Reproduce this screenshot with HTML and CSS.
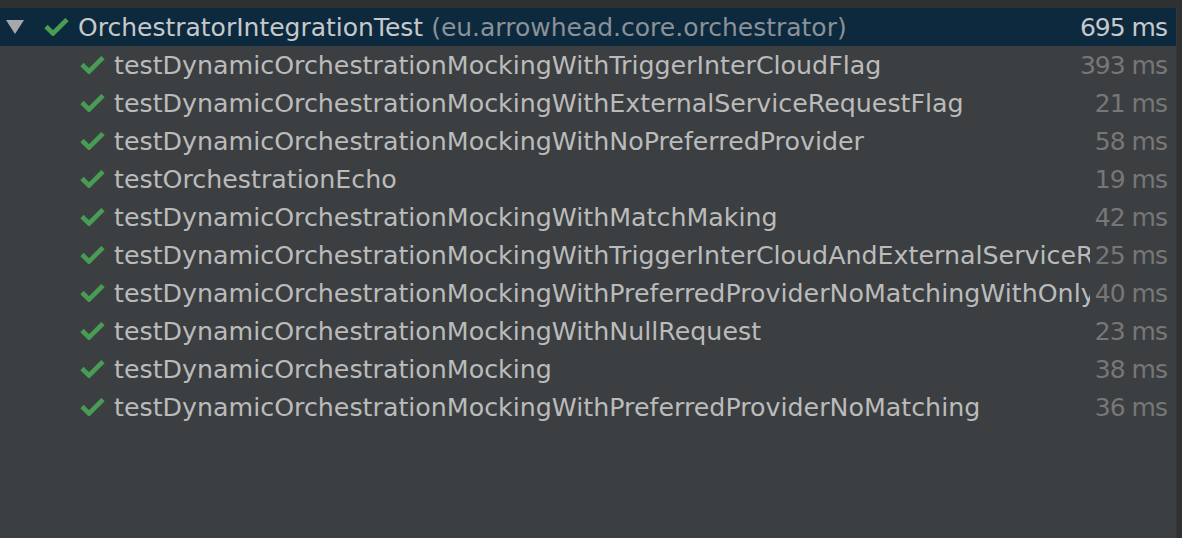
FILE: index.html
```html
<!DOCTYPE html>
<html>
<head>
<meta charset="utf-8">
<link rel="stylesheet" href="styles.css">
</head>
<body>
<div class="panel">
  <div class="topbar"></div>
  <div class="body">
    <div class="tree">
      <div class="row root">
        <span class="arrow"></span>
        <svg class="check" viewBox="0 0 25 18"><polyline points="2,8.5 9,15.5 23,1.5"/></svg>
        <span class="name">OrchestratorIntegrationTest <span class="pkg">(eu.arrowhead.core.orchestrator)</span></span>
        <span class="time">695 ms</span>
      </div>
      <div class="row child">
        <svg class="check" viewBox="0 0 25 18"><polyline points="2,8.5 9,15.5 23,1.5"/></svg>
        <span class="name">testDynamicOrchestrationMockingWithTriggerInterCloudFlag</span>
        <span class="time">393 ms</span>
      </div>
      <div class="row child">
        <svg class="check" viewBox="0 0 25 18"><polyline points="2,8.5 9,15.5 23,1.5"/></svg>
        <span class="name">testDynamicOrchestrationMockingWithExternalServiceRequestFlag</span>
        <span class="time">21 ms</span>
      </div>
      <div class="row child">
        <svg class="check" viewBox="0 0 25 18"><polyline points="2,8.5 9,15.5 23,1.5"/></svg>
        <span class="name">testDynamicOrchestrationMockingWithNoPreferredProvider</span>
        <span class="time">58 ms</span>
      </div>
      <div class="row child">
        <svg class="check" viewBox="0 0 25 18"><polyline points="2,8.5 9,15.5 23,1.5"/></svg>
        <span class="name">testOrchestrationEcho</span>
        <span class="time">19 ms</span>
      </div>
      <div class="row child">
        <svg class="check" viewBox="0 0 25 18"><polyline points="2,8.5 9,15.5 23,1.5"/></svg>
        <span class="name">testDynamicOrchestrationMockingWithMatchMaking</span>
        <span class="time">42 ms</span>
      </div>
      <div class="row child">
        <svg class="check" viewBox="0 0 25 18"><polyline points="2,8.5 9,15.5 23,1.5"/></svg>
        <span class="name">testDynamicOrchestrationMockingWithTriggerInterCloudAndExternalServiceRequestFlag</span>
        <span class="time">25 ms</span>
      </div>
      <div class="row child">
        <svg class="check" viewBox="0 0 25 18"><polyline points="2,8.5 9,15.5 23,1.5"/></svg>
        <span class="name">testDynamicOrchestrationMockingWithPreferredProviderNoMatchingWithOnlyPreferredFlag</span>
        <span class="time">40 ms</span>
      </div>
      <div class="row child">
        <svg class="check" viewBox="0 0 25 18"><polyline points="2,8.5 9,15.5 23,1.5"/></svg>
        <span class="name">testDynamicOrchestrationMockingWithNullRequest</span>
        <span class="time">23 ms</span>
      </div>
      <div class="row child">
        <svg class="check" viewBox="0 0 25 18"><polyline points="2,8.5 9,15.5 23,1.5"/></svg>
        <span class="name">testDynamicOrchestrationMocking</span>
        <span class="time">38 ms</span>
      </div>
      <div class="row child">
        <svg class="check" viewBox="0 0 25 18"><polyline points="2,8.5 9,15.5 23,1.5"/></svg>
        <span class="name">testDynamicOrchestrationMockingWithPreferredProviderNoMatching</span>
        <span class="time">36 ms</span>
      </div>
    </div>
    <div class="scroll"></div>
  </div>
</div>
</body>
</html>
```

FILE: styles.css
```css
html, body {
  margin: 0;
  padding: 0;
  background: #3c3f41;
}
.panel {
  width: 1182px;
  height: 538px;
  display: flex;
  flex-direction: column;
  font-family: "DejaVu Sans", sans-serif;
  font-size: 25px;
}
.topbar {
  height: 8px;
  background: #2e3032;
  flex: none;
}
.body {
  flex: 1;
  display: flex;
}
.tree {
  flex: 1;
  min-width: 0;
  display: flex;
  flex-direction: column;
}
.scroll {
  width: 5px;
  background: #2f3133;
  border-left: 1px solid #353739;
}
.row {
  height: 38px;
  display: flex;
  align-items: center;
  padding-right: 9px;
  color: #bbbbbb;
  white-space: nowrap;
}
.row.root {
  background: #0d293e;
  padding-left: 6px;
  color: #c6c9cc;
}
.row.child {
  padding-left: 80px;
  font-size: 25.3px;
}
.arrow {
  width: 0;
  height: 0;
  border-left: 9px solid transparent;
  border-right: 9px solid transparent;
  border-top: 14px solid #a6a8aa;
  margin-right: 20px;
  flex: none;
}
.check {
  width: 25px;
  height: 18px;
  flex: none;
  margin-right: 9px;
}
.check polyline {
  fill: none;
  stroke: #499c54;
  stroke-width: 4.6;
}
.name {
  flex: 1;
  min-width: 0;
  overflow: hidden;
}
.pkg {
  color: #8a9198;
}
.time {
  flex: none;
  padding-left: 5px;
  color: #777777;
  letter-spacing: -1px;
  font-size: 25px;
}
.root .time {
  color: #c6c9cc;
}
```
